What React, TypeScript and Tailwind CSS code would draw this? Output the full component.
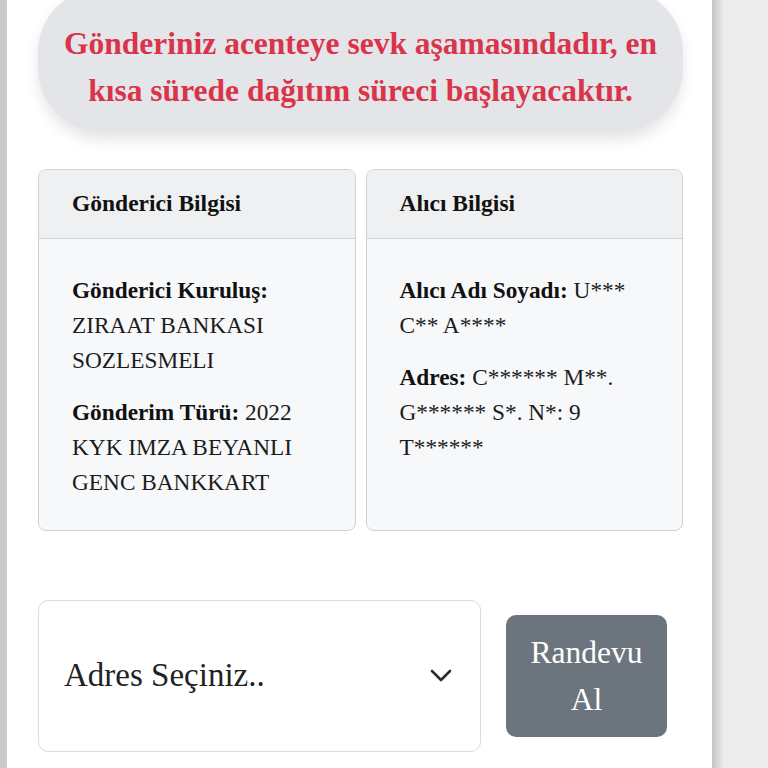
export default function App() {
  return (
    <div className="flex h-[768px] w-[768px] overflow-hidden bg-[#ededed] font-['Liberation_Serif',serif]">
      {/* left edge */}
      <div className="w-[7px] shrink-0 bg-[#c9c9c9]" />

      {/* page column */}
      <div className="w-[705px] shrink-0 bg-white pl-[31px] pr-[29px]">
        {/* status pill */}
        <div className="-mt-[12px] rounded-[64px] bg-[#e4e5e8] pt-[32px] pb-[18px] text-center text-[31.5px] font-bold leading-[47px] text-[#d9344a] shadow-[0_8px_14px_rgba(0,0,0,0.10)]">
          Gönderiniz acenteye sevk aşamasındadır, en
          <br />
          kısa sürede dağıtım süreci başlayacaktır.
        </div>

        {/* info cards */}
        <div className="mt-[37px] grid grid-cols-2 gap-[10px]">
          <div className="h-[362px] overflow-hidden rounded-lg border border-[#cfd1d4] bg-[#f7f8fa]">
            <div className="flex h-[69px] items-center border-b border-[#cfd1d4] bg-[#eff0f2] px-[33px] text-[23.5px] font-bold text-[#111]">
              Gönderici Bilgisi
            </div>
            <div className="px-[33px] pt-[34px] text-[23.3px] leading-[35px] text-[#1c1c1c]">
              <p>
                <b className="text-[#111]">Gönderici Kuruluş:</b>
                <br />
                ZIRAAT BANKASI
                <br />
                SOZLESMELI
              </p>
              <p className="mt-[17px]">
                <b className="text-[#111]">Gönderim Türü:</b> 2022
                <br />
                KYK IMZA BEYANLI
                <br />
                GENC BANKKART
              </p>
            </div>
          </div>

          <div className="h-[362px] overflow-hidden rounded-lg border border-[#cfd1d4] bg-[#f7f8fa]">
            <div className="flex h-[69px] items-center border-b border-[#cfd1d4] bg-[#eff0f2] px-[33px] text-[23.5px] font-bold text-[#111]">
              Alıcı Bilgisi
            </div>
            <div className="px-[33px] pt-[34px] text-[23.3px] leading-[35px] text-[#1c1c1c]">
              <p>
                <b className="text-[#111]">Alıcı Adı Soyadı:</b> U***
                <br />
                C** A****
              </p>
              <p className="mt-[17px]">
                <b className="text-[#111]">Adres:</b> C****** M**.
                <br />
                G****** S*. N*: 9
                <br />
                T******
              </p>
            </div>
          </div>
        </div>

        {/* address select + button */}
        <div className="mt-[69px] flex items-center gap-[25px]">
          <div className="flex h-[152px] w-[443px] items-center justify-between rounded-[10px] border border-[#dcdcdc] bg-white pl-[25px] pr-[28px]">
            <span className="text-[33px] text-[#222]">Adres Seçiniz..</span>
            <svg width="22" height="14" viewBox="0 0 22 14" fill="none">
              <path d="M2 2l9 9 9-9" stroke="#2b2b2b" strokeWidth="2.6" strokeLinecap="round" strokeLinejoin="round" />
            </svg>
          </div>
          <button className="h-[122px] w-[161px] rounded-[10px] bg-[#6c757d] text-[31.5px] leading-[47px] text-white">
            Randevu
            <br />
            Al
          </button>
        </div>
      </div>

      {/* right shadow */}
      <div className="w-[12px] shrink-0 bg-gradient-to-r from-[#c4c4c4] to-[#ececec]" />
    </div>
  );
}
